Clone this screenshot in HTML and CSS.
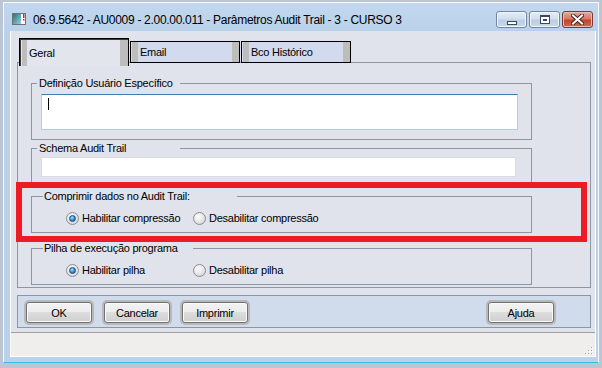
FILE: index.html
```html
<!DOCTYPE html>
<html lang="pt">
<head>
  <meta charset="UTF-8" />
  <title>Parâmetros Audit Trail</title>
  <link rel="stylesheet" href="styles.css">
</head>
<body>
  <div class="window">
    <div class="titlebar">
      <svg class="app-icon" width="14" height="12" viewBox="0 0 14 12">
        <defs>
          <linearGradient id="ico" x1="0" y1="0" x2="1" y2="1">
            <stop offset="0" stop-color="#1f7d6e"/>
            <stop offset="1" stop-color="#9cc9e6"/>
          </linearGradient>
        </defs>
        <rect x="0.5" y="0.5" width="13" height="11" fill="#fff" stroke="#6d7278"/>
        <rect x="1" y="1" width="8" height="10" fill="url(#ico)"/>
        <rect x="11" y="1" width="1.5" height="4" fill="#d42020"/>
        <rect x="11" y="6" width="1.5" height="1.5" fill="#d42020"/>
      </svg>
      <span class="title">06.9.5642 - AU0009 - 2.00.00.011 - Parâmetros Audit Trail - 3 - CURSO 3</span>
      <div class="caption-btns">
        <span class="cap-btn"><i class="glyph-min"></i></span>
        <span class="cap-btn"><i class="glyph-max"></i></span>
        <span class="cap-btn close">
          <svg width="13" height="11" viewBox="0 0 13 11">
            <path d="M2 1.5 L11 9.5 M11 1.5 L2 9.5" stroke="#4a2420" stroke-width="4" stroke-linecap="square"/>
            <path d="M2 1.5 L11 9.5 M11 1.5 L2 9.5" stroke="#fff" stroke-width="2" stroke-linecap="square"/>
          </svg>
        </span>
      </div>
    </div>

    <div class="client">
      <div class="content">
        <div class="tabs">
          <div class="tab active">Geral</div>
          <div class="tab">Email</div>
          <div class="tab">Bco Histórico</div>
        </div>

        <div class="panel">
          <div class="group g-user">
            <div class="group-title">Definição Usuário Específico</div>
            <div class="field field-tall"><span class="caret"></span></div>
          </div>

          <div class="group g-schema">
            <div class="group-title">Schema Audit Trail</div>
            <div class="field field-line"></div>
          </div>

          <div class="group g-compress">
            <div class="group-title title-wide">Comprimir dados no Audit Trail:</div>
            <div class="options">
              <label class="option"><span class="radio on"></span>Habilitar compressão</label>
              <label class="option"><span class="radio"></span>Desabilitar compressão</label>
            </div>
          </div>

          <div class="group g-stack">
            <div class="group-title title-mid">Pilha de execução programa</div>
            <div class="options">
              <label class="option"><span class="radio on"></span>Habilitar pilha</label>
              <label class="option"><span class="radio"></span>Desabilitar pilha</label>
            </div>
          </div>
        </div>

        <div class="buttonbar">
          <button class="btn">OK</button>
          <button class="btn">Cancelar</button>
          <button class="btn">Imprimir</button>
          <button class="btn btn-help">Ajuda</button>
        </div>
      </div>

      <div class="statusbar">
        <svg class="grip" width="9" height="9" viewBox="0 0 9 9">
          <g fill="#fff">
            <rect x="8" y="1" width="1" height="1"/>
            <rect x="5" y="4" width="1" height="1"/><rect x="8" y="4" width="1" height="1"/>
            <rect x="2" y="7" width="1" height="1"/><rect x="5" y="7" width="1" height="1"/><rect x="8" y="7" width="1" height="1"/>
          </g>
          <g fill="#a8a8a8">
            <rect x="7" y="0" width="1" height="1"/>
            <rect x="4" y="3" width="1" height="1"/><rect x="7" y="3" width="1" height="1"/>
            <rect x="1" y="6" width="1" height="1"/><rect x="4" y="6" width="1" height="1"/><rect x="7" y="6" width="1" height="1"/>
          </g>
        </svg>
      </div>
    </div>
  </div>

  <div class="highlight"></div>
</body>
</html>
```

FILE: styles.css
```css
body {
  margin: 0;
  background: #bcc5d2;
  font-family: "Liberation Sans", Arial, sans-serif;
  font-size: 11px;
  letter-spacing: -0.25px;
  color: #000;
}

.window {
  box-sizing: border-box;
  width: 596px;
  height: 361px;
  margin: 2px 0 0 3px;
  background: #b9d1ea;
  border: 1px solid #f4f8fc;
  border-bottom-color: #35bde0;
  display: flex;
  flex-direction: column;
}

/* title bar */
.titlebar {
  height: 28px;
  display: flex;
  align-items: flex-start;
  background: linear-gradient(#c3d8ee, #b9d1ea);
}

.app-icon {
  margin: 10px 0 0 8px;
}

.title {
  margin: 9px 0 0 7px;
  font-size: 12px;
  letter-spacing: -0.3px;
  line-height: 16px;
  white-space: nowrap;
}

.caption-btns {
  margin: 8px 5px 0 auto;
  display: flex;
  gap: 2px;
}

.cap-btn {
  box-sizing: border-box;
  width: 31px;
  height: 17px;
  border: 1px solid #6f86a6;
  border-radius: 3px;
  background: linear-gradient(#e4ecf6 0%, #d3dfee 45%, #bccde4 55%, #c9d8ec 100%);
  box-shadow: inset 0 0 0 1px #f2f6fb;
  display: flex;
  align-items: center;
  justify-content: center;
}

.cap-btn.close {
  border-color: #7a3a33;
  background: linear-gradient(#e8a89a 0%, #d77a68 45%, #c2452f 55%, #cf6a50 100%);
  box-shadow: inset 0 0 0 1px #eebbb0;
}

.glyph-min {
  width: 8px;
  height: 2px;
  margin-top: 6px;
  background: #fff;
  border: 1px solid #3b4a60;
}

.glyph-max {
  box-sizing: border-box;
  width: 10px;
  height: 9px;
  border: 1px solid #3b4a60;
  border-top-width: 2px;
  background: #fff;
  box-shadow: inset 0 0 0 2px #fff, inset 0 0 0 3px #3b4a60;
}

/* client area */
.client {
  box-sizing: border-box;
  width: 586px;
  height: 326px;
  margin-left: 6px;
  background: #e0e3eb;
  border: 1px solid #fff;
  border-top: none;
  display: flex;
  flex-direction: column;
}

.content {
  padding: 6px 4px 0 6px;
}

.tabs {
  position: relative;
  z-index: 1;
  height: 26px;
  margin-bottom: -1px;
  padding-left: 2px;
  display: flex;
  align-items: flex-end;
}

.tab {
  box-sizing: border-box;
  width: 110px;
  height: 22px;
  padding: 4px 0 0 9px;
  border: 1px solid #000;
  background: linear-gradient(to right, #d2daed 0 1px, #bdbdbd 1px 7px, #d2daed 7px calc(100% - 7px), #bdbdbd calc(100% - 7px));
}

.tab + .tab {
  margin-left: 1px;
}

.tab.active {
  height: 28px;
  margin-bottom: -3px;
  padding-top: 8px;
  border-bottom: none;
  box-shadow: inset 1px 1px 0 #3a3a3a;
  background: linear-gradient(to right, #e3e5ec 0 2px, #bdbdbd 2px 7px, #e3e5ec 7px calc(100% - 8px), #bdbdbd calc(100% - 8px));
}

.panel {
  box-sizing: border-box;
  width: 574px;
  height: 226px;
  padding: 20px 0 0 13px;
  border: 1px solid #8e96a4;
}

.group {
  box-sizing: border-box;
  width: 501px;
  border: 1px solid #8e96a4;
}

.group-title {
  box-sizing: border-box;
  width: 143px;
  height: 13px;
  line-height: 13px;
  margin: -7px 0 0 5px;
  padding-left: 2px;
  background: #e0e3eb;
  white-space: nowrap;
}

.title-wide {
  width: 194px;
  margin-left: 11px;
  padding-left: 1px;
}

.title-mid {
  width: 150px;
  margin-left: 11px;
  padding-left: 1px;
}

.g-user {
  padding-bottom: 9px;
}

.g-schema {
  margin-top: 8px;
  padding-bottom: 8px;
}

.g-compress {
  margin-top: 10px;
  padding-bottom: 7px;
}

.g-stack {
  margin-top: 15px;
  padding-bottom: 7px;
}

.field {
  box-sizing: border-box;
  margin-left: 9px;
  background: #fff;
}

.field-tall {
  width: 477px;
  height: 36px;
  margin-top: 4px;
  border: 1px solid #b3cde5;
  border-top-color: #3c7db2;
  padding: 3px 0 0 6px;
}

.caret {
  display: block;
  width: 1px;
  height: 12px;
  background: #000;
}

.field-line {
  width: 475px;
  height: 20px;
  margin-top: 2px;
  border: 1px solid #d9dce3;
}

.options {
  display: flex;
  margin: 9px 0 0 34px;
}

.option {
  width: 127px;
  height: 13px;
  line-height: 13px;
  display: flex;
  align-items: center;
  gap: 3px;
  white-space: nowrap;
}

.radio {
  box-sizing: border-box;
  width: 13px;
  height: 13px;
  border-radius: 50%;
  border: 1px solid #8a8d92;
  background: radial-gradient(circle at 40% 35%, #ffffff, #dcdcdc 70%, #c8c8c8);
  display: flex;
  align-items: center;
  justify-content: center;
}

.radio.on::after {
  content: "";
  width: 7px;
  height: 7px;
  border-radius: 50%;
  box-sizing: border-box;
  border: 1px solid #1b4f80;
  background: radial-gradient(circle at 40% 35%, #b8e4ff, #2f86d2 55%, #17508e);
}

/* bottom buttons */
.buttonbar {
  box-sizing: border-box;
  width: 574px;
  height: 33px;
  margin-top: 7px;
  padding: 6px 36px 0 8px;
  border: 1px solid #8e96a4;
  background: #d0dbec;
  display: flex;
  align-items: flex-start;
  gap: 12px;
}

.btn {
  box-sizing: border-box;
  width: 66px;
  height: 21px;
  padding: 0;
  font-family: inherit;
  font-size: 11px;
  letter-spacing: -0.25px;
  color: #000;
  border: 1px solid #707070;
  border-radius: 3px;
  background: linear-gradient(#f3f3f3 0%, #ebebeb 50%, #dddddd 50%, #cfcfcf 100%);
  box-shadow: inset 0 0 0 1px #fbfbfb, 0 0 0 2px #b9b9b9;
}

.btn-help {
  margin-left: auto;
}

.statusbar {
  box-sizing: border-box;
  height: 24px;
  margin-top: 4px;
  border-top: 1px solid #a0a0a0;
  background: #f0eeec;
  display: flex;
  justify-content: flex-end;
  align-items: flex-end;
  padding: 0 2px 0 0;
}

.grip {
  display: block;
}

/* red annotation drawn over the dialog */
.highlight {
  position: absolute;
  left: 16px;
  top: 182px;
  width: 571px;
  height: 60px;
  box-sizing: border-box;
  border: 6px solid #ed1c24;
}
```
